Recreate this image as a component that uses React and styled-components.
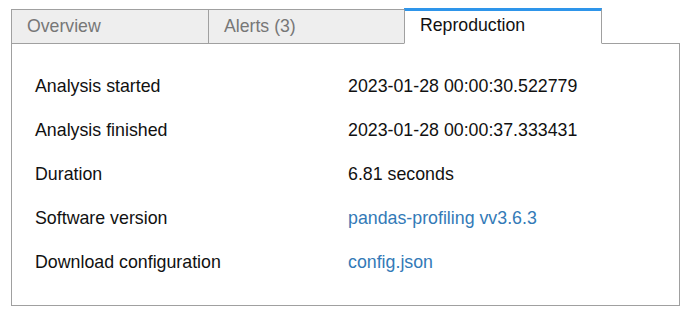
import React from 'react'
import styled, { createGlobalStyle } from 'styled-components'

const GlobalStyle = createGlobalStyle`
  body {
    margin: 0;
    background: #fff;
    font-family: "Liberation Sans", Arial, sans-serif;
  }
`

const Page = styled.div`
  padding: 8px 7px 0 11px;
`

const TabBar = styled.ul`
  display: flex;
  align-items: flex-end;
  list-style: none;
  margin: 0 0 -1px 0;
  padding: 0;
  position: relative;
  z-index: 1;
`

const Tab = styled.li`
  box-sizing: border-box;
  width: ${p => p.$width}px;
  margin-left: ${p => (p.$first ? 0 : -1)}px;
  height: ${p => (p.$active ? 36 : 35)}px;
  padding: 0 15px;
  display: flex;
  align-items: center;
  font-size: 17.7px;
  border: 1px solid #a0a0a0;
  border-top: ${p => (p.$active ? '3px solid #2e95ea' : '1px solid #a0a0a0')};
  border-bottom-color: ${p => (p.$active ? '#fff' : '#a0a0a0')};
  background: ${p => (p.$active ? '#fff' : '#eeeeee')};
  color: ${p => (p.$active ? '#111' : '#777')};
  padding-bottom: ${p => (p.$active ? 3 : 0)}px;
`

const Panel = styled.div`
  box-sizing: border-box;
  border: 1px solid #a0a0a0;
  height: 263px;
  padding: 20px 23px;
`

const Table = styled.div`
  display: grid;
  grid-template-columns: 313px 1fr;
  grid-auto-rows: 44px;
  font-size: 17.8px;
  color: #111;
`

const Cell = styled.div`
  display: flex;
  align-items: center;
`

const Link = styled.a`
  color: #337ab7;
  text-decoration: none;
`

const tabs = [
  { label: 'Overview', width: 198 },
  { label: 'Alerts (3)', width: 197 },
  { label: 'Reproduction', width: 198, active: true }
]

const rows = [
  ['Analysis started', '2023-01-28 00:00:30.522779'],
  ['Analysis finished', '2023-01-28 00:00:37.333431'],
  ['Duration', '6.81 seconds'],
  ['Software version', <Link href='#'>pandas-profiling vv3.6.3</Link>],
  ['Download configuration', <Link href='#'>config.json</Link>]
]

export default function App () {
  return (
    <Page>
      <GlobalStyle />
      <TabBar>
        {tabs.map((t, i) => (
          <Tab key={t.label} $first={i === 0} $width={t.width} $active={t.active}>
            {t.label}
          </Tab>
        ))}
      </TabBar>
      <Panel>
        <Table>
          {rows.map(([label, value]) => (
            <React.Fragment key={label}>
              <Cell>{label}</Cell>
              <Cell>{value}</Cell>
            </React.Fragment>
          ))}
        </Table>
      </Panel>
    </Page>
  )
}
